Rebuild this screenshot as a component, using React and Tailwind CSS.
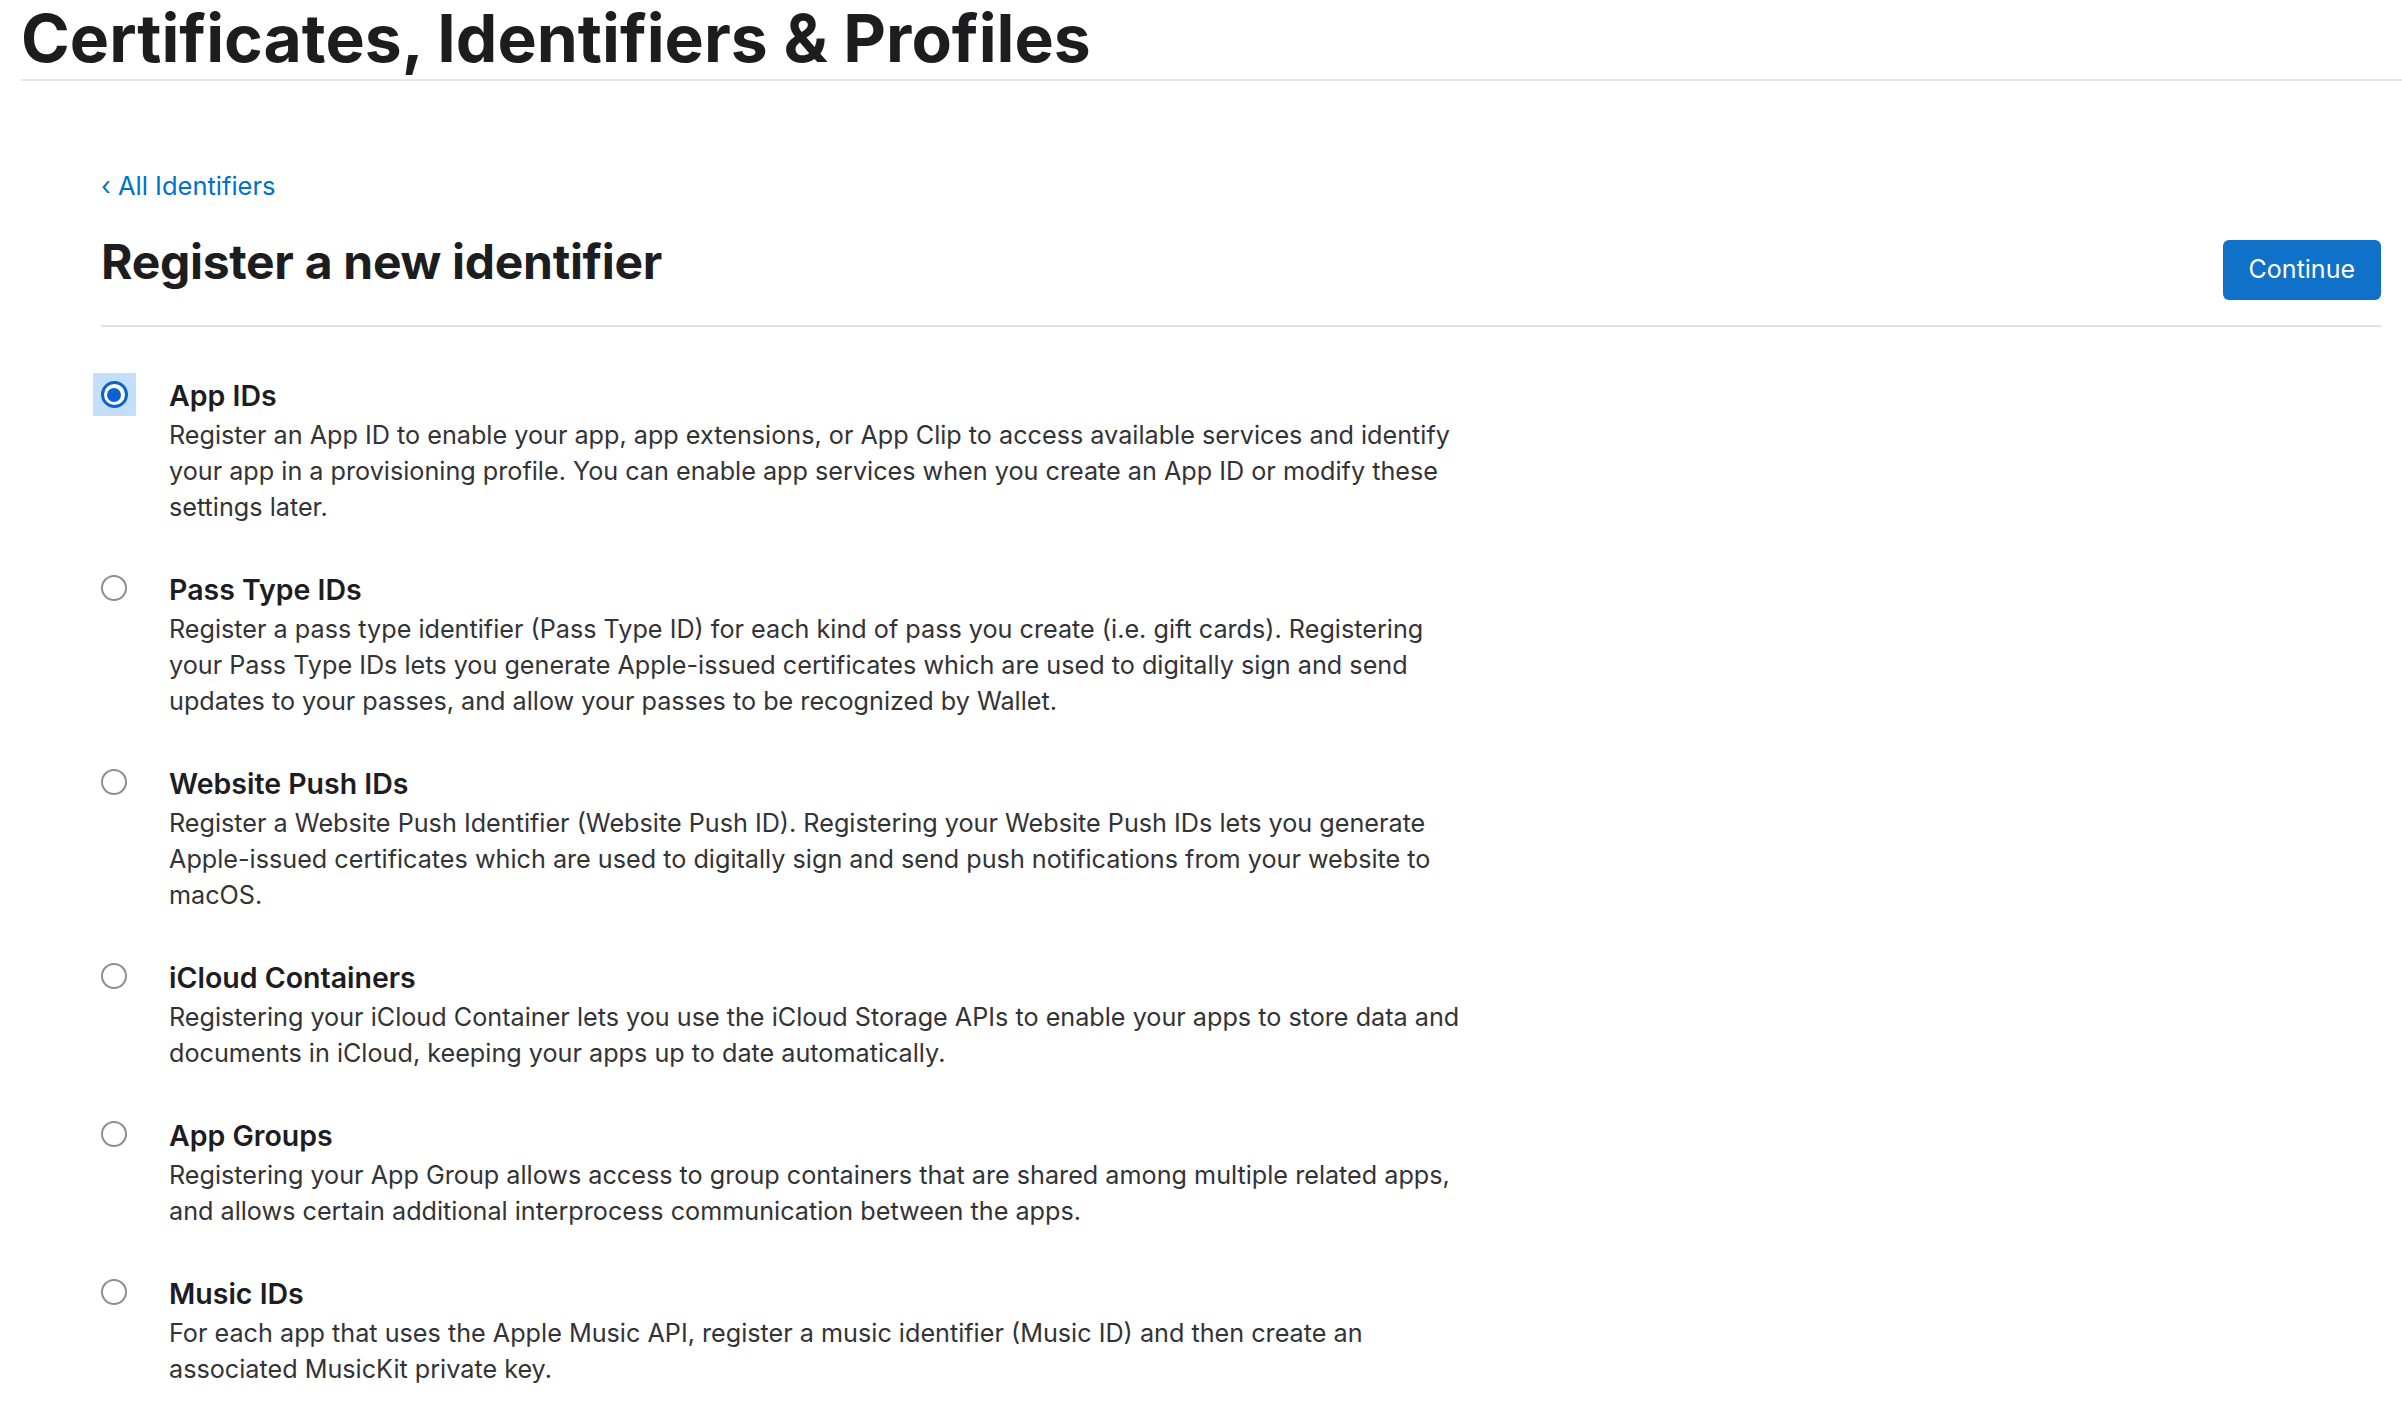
import { useState } from 'react';

const identifierTypes = [
  {
    id: 'app',
    title: 'App IDs',
    lines: [
      'Register an App ID to enable your app, app extensions, or App Clip to access available services and identify',
      'your app in a provisioning profile. You can enable app services when you create an App ID or modify these',
      'settings later.',
    ],
  },
  {
    id: 'pass',
    title: 'Pass Type IDs',
    lines: [
      'Register a pass type identifier (Pass Type ID) for each kind of pass you create (i.e. gift cards). Registering',
      'your Pass Type IDs lets you generate Apple-issued certificates which are used to digitally sign and send',
      'updates to your passes, and allow your passes to be recognized by Wallet.',
    ],
  },
  {
    id: 'web',
    title: 'Website Push IDs',
    lines: [
      'Register a Website Push Identifier (Website Push ID). Registering your Website Push IDs lets you generate',
      'Apple-issued certificates which are used to digitally sign and send push notifications from your website to',
      'macOS.',
    ],
  },
  {
    id: 'icloud',
    title: 'iCloud Containers',
    lines: [
      'Registering your iCloud Container lets you use the iCloud Storage APIs to enable your apps to store data and',
      'documents in iCloud, keeping your apps up to date automatically.',
    ],
  },
  {
    id: 'groups',
    title: 'App Groups',
    lines: [
      'Registering your App Group allows access to group containers that are shared among multiple related apps,',
      'and allows certain additional interprocess communication between the apps.',
    ],
  },
  {
    id: 'music',
    title: 'Music IDs',
    lines: [
      'For each app that uses the Apple Music API, register a music identifier (Music ID) and then create an',
      'associated MusicKit private key.',
    ],
  },
];

function Radio({ checked, onClick }) {
  if (checked) {
    return (
      <button onClick={onClick} className="-m-[8px] p-[8px] bg-[#c3dffc] flex">
        <span className="w-[27px] h-[27px] rounded-full bg-white border-[3px] border-[#0b62d0] flex items-center justify-center">
          <span className="w-[14px] h-[14px] rounded-full bg-[#0b62d0]" />
        </span>
      </button>
    );
  }
  return (
    <button onClick={onClick} className="flex">
      <span className="w-[26px] h-[26px] rounded-full bg-white border-2 border-[#8e8e8e]" />
    </button>
  );
}

export default function App() {
  const [selected, setSelected] = useState('app');

  return (
    <div className="min-h-screen bg-white text-[#1d1d1f] font-['Inter',sans-serif]">
      {/* Header */}
      <header className="pl-[21px]">
        <h1 className="text-[66px] font-bold leading-[76px] pb-[3px] border-b-2 border-[#e6e6e6]">
          Certificates, Identifiers &amp; Profiles
        </h1>
      </header>

      <main className="pl-[101px] pr-[21px] pt-[87px]">
        <a href="#" className="block text-[25.5px] leading-[36px] text-[#0070c9]">
          ‹ All Identifiers
        </a>

        <div className="mt-[30px] flex items-start justify-between">
          <h2 className="text-[48px] font-bold leading-[56px] tracking-[-0.3px]">
            Register a new identifier
          </h2>
          <button className="mt-[6px] h-[60px] px-[26px] rounded-[6px] bg-[#0f71c8] text-white text-[25px]">
            Continue
          </button>
        </div>

        <div className="mt-[25px] border-t-2 border-[#e0e0e0]" />

        {/* Identifier types */}
        <div className="pt-[50px] flex flex-col gap-[46px]">
          {identifierTypes.map((t) => (
            <div key={t.id} className="flex gap-[42px]">
              <div className="pt-[4px] w-[26px] flex items-start justify-center">
                <Radio checked={selected === t.id} onClick={() => setSelected(t.id)} />
              </div>
              <div>
                <div className="text-[28.5px] font-semibold leading-[38px]">{t.title}</div>
                <p className="mt-[2px] text-[25.2px] leading-[36px] text-[#333336]">
                  {t.lines.map((l, i) => (
                    <span key={i} className="block whitespace-nowrap">
                      {l}
                    </span>
                  ))}
                </p>
              </div>
            </div>
          ))}
        </div>
      </main>
    </div>
  );
}
